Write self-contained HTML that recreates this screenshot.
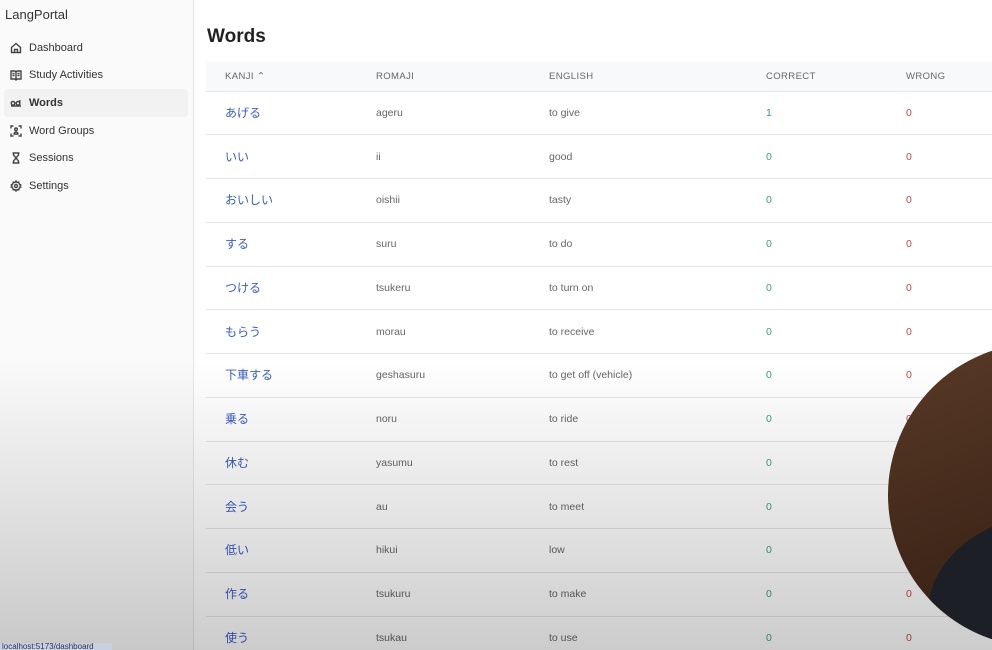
<!DOCTYPE html>
<html><head><meta charset="utf-8"><style>
*{margin:0;padding:0;box-sizing:border-box}
html,body{width:992px;height:650px;overflow:hidden}
body{background:#fff;font-family:"Liberation Sans","Noto Sans CJK JP",sans-serif;position:relative;color:#333}
.side{position:absolute;left:0;top:0;width:194px;height:650px;background:#fafafa;border-right:1px solid #e6e6e6}
.logo{position:absolute;left:5px;top:7px;font-size:13px;color:#333}
.nav{position:absolute;left:4px;top:34px;width:184px}
.nav div{height:27.6px;display:flex;align-items:center;padding-left:6px;font-size:11px;color:#333;border-radius:4px}
.nav div svg{width:12px;height:12px;margin-right:7px;stroke:#444;fill:none;stroke-width:1.4}
.nav .act{background:#f2f2f2;font-weight:bold}
h1{position:absolute;left:207px;top:26px;font-size:19px;font-weight:bold;color:#222}
table{position:absolute;left:206px;top:62px;width:800px;border-collapse:collapse;font-size:10.5px}
th{height:29px;text-align:left;font-weight:normal;color:#666;font-size:9.5px;letter-spacing:.4px;background:#f8f9fa;border-bottom:1px solid #e8e8e8;vertical-align:middle}
td{height:43.75px;border-bottom:1px solid #e6e6e6;color:#666;vertical-align:middle;line-height:14px}
th:first-child,td:first-child{padding-left:19px;width:170px}
td:first-child{color:#3a5cc4;font-size:12px}
.c2{width:173px}.c3{width:217px}.c4{width:140px}
.g{color:#3aa56a}.r{color:#c04848}.b{color:#3a8fb0}
.shade{position:absolute;left:0;top:0;width:992px;height:650px;background:linear-gradient(to bottom,rgba(0,0,0,0) 0,rgba(0,0,0,0) 360px,rgba(0,0,0,.2) 650px)}
.cam{position:absolute;left:888px;top:343px;width:304px;height:304px;border-radius:50%;background:linear-gradient(160deg,#5a3a28,#3e2618 60%,#2a1a12);overflow:hidden}
.cam div{position:absolute;left:40px;top:170px;width:260px;height:200px;border-radius:50% 0 0 0;background:#1d1f26}
.url{position:absolute;left:0;top:643px;width:112px;height:7px;background:#c9d1e0;font-size:8px;color:#335;line-height:8px;padding-left:2px;overflow:hidden}
</style></head><body>
<div class="side">
<div class="logo">LangPortal</div>
<div class="nav">
<div><svg viewBox="0 0 12 12"><path d="M1.5 5.5L6 1.5l4.5 4v5h-9z M4.5 10.5v-3h3v3"/></svg>Dashboard</div>
<div><svg viewBox="0 0 12 12"><path d="M1 2h4l1 1 1-1h4v8H7l-1 1-1-1H1z M6 3v7 M2.5 4.5h2M2.5 6.5h2M7.5 4.5h2M7.5 6.5h2"/></svg>Study Activities</div>
<div class="act"><svg viewBox="0 0 12 12"><path d="M1 9h10 M3 4.5a1.8 1.8 0 1 1 0 3.6a1.8 1.8 0 1 1 0-3.6 M8 4.5a1.8 1.8 0 1 1 0 3.6a1.8 1.8 0 1 1 0-3.6 M9.8 3v5"/></svg>Words</div>
<div><svg viewBox="0 0 12 12"><path d="M1 3.5V1h2.5M8.5 1H11v2.5M11 8.5V11H8.5M3.5 11H1V8.5 M6 3a1.3 1.3 0 1 1 0 2.6a1.3 1.3 0 1 1 0-2.6 M4 9a2 2 0 0 1 4 0z"/></svg>Word Groups</div>
<div><svg viewBox="0 0 12 12"><path d="M2.5 1h7M2.5 11h7M3.5 1v2l2.5 3-2.5 3v2M8.5 1v2L6 6l2.5 3v2"/></svg>Sessions</div>
<div><svg viewBox="0 0 12 12"><path d="M6 1l1 1.5 1.7-.4.4 1.7L10.8 5 10 6l.8 1-1.7 1.2-.4 1.7L7 9.5 6 11 5 9.5l-1.7.4-.4-1.7L1.2 7 2 6l-.8-1 1.7-1.2.4-1.7L5 2.5z M6 4.5a1.5 1.5 0 1 1 0 3a1.5 1.5 0 1 1 0-3"/></svg>Settings</div>
</div>
</div>
<h1>Words</h1>
<table>
<tr><th>KANJI &#8963;</th><th class="c2">ROMAJI</th><th class="c3">ENGLISH</th><th class="c4">CORRECT</th><th>WRONG</th></tr>
<tr><td>あげる</td><td>ageru</td><td>to give</td><td class="b">1</td><td class="r">0</td></tr>
<tr><td>いい</td><td>ii</td><td>good</td><td class="g">0</td><td class="r">0</td></tr>
<tr><td>おいしい</td><td>oishii</td><td>tasty</td><td class="g">0</td><td class="r">0</td></tr>
<tr><td>する</td><td>suru</td><td>to do</td><td class="g">0</td><td class="r">0</td></tr>
<tr><td>つける</td><td>tsukeru</td><td>to turn on</td><td class="g">0</td><td class="r">0</td></tr>
<tr><td>もらう</td><td>morau</td><td>to receive</td><td class="g">0</td><td class="r">0</td></tr>
<tr><td>下車する</td><td>geshasuru</td><td>to get off (vehicle)</td><td class="g">0</td><td class="r">0</td></tr>
<tr><td>乗る</td><td>noru</td><td>to ride</td><td class="g">0</td><td class="r">0</td></tr>
<tr><td>休む</td><td>yasumu</td><td>to rest</td><td class="g">0</td><td class="r">0</td></tr>
<tr><td>会う</td><td>au</td><td>to meet</td><td class="g">0</td><td class="r">0</td></tr>
<tr><td>低い</td><td>hikui</td><td>low</td><td class="g">0</td><td class="r">0</td></tr>
<tr><td>作る</td><td>tsukuru</td><td>to make</td><td class="g">0</td><td class="r">0</td></tr>
<tr><td>使う</td><td>tsukau</td><td>to use</td><td class="g">0</td><td class="r">0</td></tr>
</table>
<div class="shade"></div>
<div class="cam"><div></div></div>
<div class="url">localhost:5173/dashboard</div>
</body></html>
